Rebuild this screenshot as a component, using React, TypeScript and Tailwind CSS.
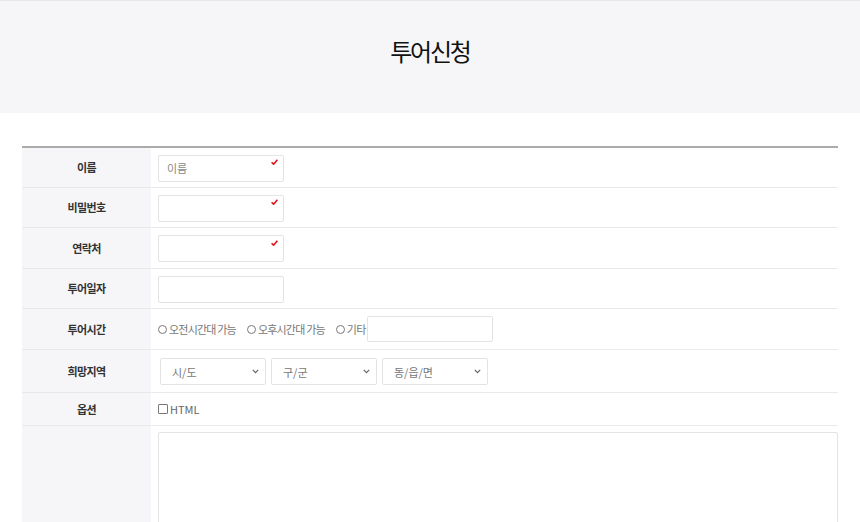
import React from "react";

const font = { fontFamily: '"Noto Sans CJK KR", "Noto Sans", sans-serif' };

function Check() {
  return (
    <svg className="absolute right-[6px] top-[5px]" width="7" height="6" viewBox="0 0 7 6">
      <path d="M0.6 3.2 L2.6 5.2 L6.4 0.8" stroke="#e0121b" strokeWidth="1.6" fill="none" />
    </svg>
  );
}

function TextBox({ placeholder, required }: { placeholder?: string; required?: boolean }) {
  return (
    <div className="relative w-[126px] h-[27px]">
      <input
        placeholder={placeholder}
        className="w-full h-full border border-[#e3e3e3] rounded-[2px] px-[8px] text-[11px] text-[#777] placeholder:text-[#888] outline-none bg-white"
        style={font}
      />
      {required && <Check />}
    </div>
  );
}

function Row({ label, children, className = "" }: { label: string; children: React.ReactNode; className?: string }) {
  return (
    <div className={"flex border-b border-[#e9e9e9] " + className}>
      <div className="w-[129px] shrink-0 bg-[#f6f6f8] flex items-center justify-center text-[11px] font-bold text-[#333] tracking-[-0.6px]">
        {label}
      </div>
      <div className="flex-1 flex items-center pl-[7px]">{children}</div>
    </div>
  );
}

function Radio({ label }: { label: string }) {
  return (
    <label className="flex items-center text-[11px] text-[#777] tracking-[-0.8px] whitespace-pre">
      <span className="w-[9px] h-[9px] rounded-full border border-[#777] mr-[2px] bg-white" />
      {label}
    </label>
  );
}

function Select({ label }: { label: string }) {
  return (
    <div className="relative w-[106px] h-[27px]">
      <select
        className="appearance-none w-full h-full border border-[#e3e3e3] rounded-[2px] bg-white pl-[11px] text-[11px] text-[#777] outline-none"
        style={font}
        defaultValue=""
      >
        <option value="">{label}</option>
      </select>
      <svg className="absolute right-[7px] top-[11px] pointer-events-none" width="7" height="5" viewBox="0 0 7 5">
        <path d="M0.8 0.8 L3.5 3.6 L6.2 0.8" stroke="#666" strokeWidth="1.2" fill="none" />
      </svg>
    </div>
  );
}

export default function App() {
  return (
    <div className="w-[860px] h-[522px] overflow-hidden bg-white" style={font}>
      <div className="border-t border-[#e6e6e8] bg-[#f6f6f8] h-[113px] flex items-center justify-center">
        <h1 className="text-[24px] text-[#111] tracking-[-2.2px] leading-none mt-[-13px] font-normal">투어신청</h1>
      </div>
      <div className="mx-[22px] mt-[33px] border-t-[2px] border-[#ababab]">
        <Row label="이름" className="h-[40px]">
          <TextBox placeholder="이름" required />
        </Row>
        <Row label="비밀번호" className="h-[40px]">
          <TextBox required />
        </Row>
        <Row label="연락처" className="h-[41px]">
          <TextBox required />
        </Row>
        <Row label="투어일자" className="h-[40px]">
          <TextBox />
        </Row>
        <Row label="투어시간" className="h-[41px]">
          <div className="flex items-center">
            <Radio label="오전시간대 가능" />
            <span className="w-[11px]" />
            <Radio label="오후시간대 가능" />
            <span className="w-[11px]" />
            <Radio label="기타" />
            <div className="ml-[2px] w-[126px] h-[26px] border border-[#e3e3e3] rounded-[2px] bg-white" />
          </div>
        </Row>
        <Row label="희망지역" className="h-[43px]">
          <div className="flex gap-[5px] pl-[2px]">
            <Select label="시/도" />
            <Select label="구/군" />
            <Select label="동/읍/면" />
          </div>
        </Row>
        <Row label="옵션" className="h-[33px]">
          <label className="flex items-center text-[11px] text-[#666]">
            <span className="w-[10px] h-[10px] border border-[#777] rounded-[1px] mr-[2px] bg-white" />
            HTML
          </label>
        </Row>
        <div className="flex h-[120px]">
          <div className="w-[129px] shrink-0 bg-[#f6f6f8]" />
          <div className="flex-1 pl-[7px] pt-[6px]">
            <textarea className="w-full h-[110px] border border-[#e3e3e3] rounded-[2px] bg-white outline-none resize-none" />
          </div>
        </div>
      </div>
    </div>
  );
}
